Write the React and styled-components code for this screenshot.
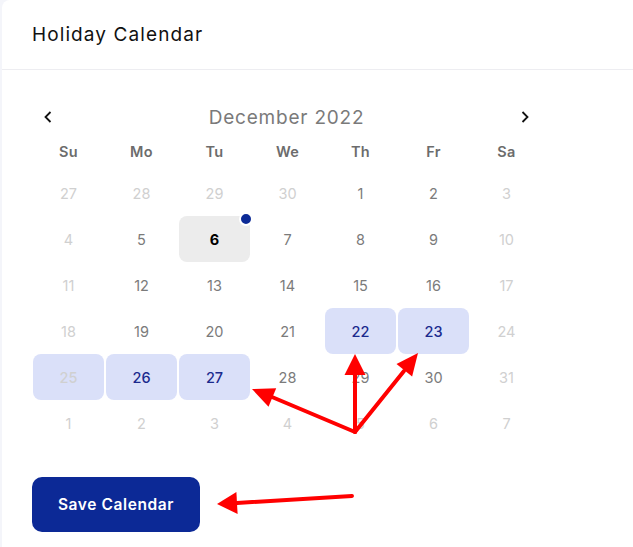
import React from "react";
import styled, { createGlobalStyle } from "styled-components";

const GlobalStyle = createGlobalStyle`
  body {
    margin: 0;
    background: #f4f5fa;
    font-family: "Inter", "Noto Sans", sans-serif;
  }
`;

const weekdays = ["Su", "Mo", "Tu", "We", "Th", "Fr", "Sa"];

const rows = [
  [27, 28, 29, 30, 1, 2, 3],
  [4, 5, 6, 7, 8, 9, 10],
  [11, 12, 13, 14, 15, 16, 17],
  [18, 19, 20, 21, 22, 23, 24],
  [25, 26, 27, 28, 29, 30, 31],
  [1, 2, 3, 4, 5, 6, 7],
];

const selected = [22, 23, 25, 26, 27];
const today = 6;

const ChevronLeft = () => (
  <svg width="8" height="12" viewBox="0 0 8 12">
    <path d="M6.5 1 L1.5 6 L6.5 11" fill="none" stroke="#111" strokeWidth="1.8" />
  </svg>
);

const ChevronRight = () => (
  <svg width="8" height="12" viewBox="0 0 8 12">
    <path d="M1.5 1 L6.5 6 L1.5 11" fill="none" stroke="#111" strokeWidth="1.8" />
  </svg>
);

const Arrows = () => (
  <Overlay width="633" height="547" viewBox="0 0 633 547">
    <g stroke="#ff0000" strokeWidth="4" strokeLinecap="round" fill="none">
      <line x1="355" y1="432" x2="355" y2="373" />
      <line x1="355" y1="432" x2="404" y2="371" />
      <line x1="355" y1="432" x2="272" y2="397" />
      <line x1="352" y1="496" x2="237" y2="503" />
    </g>
    <g fill="#ff0000">
      <polygon points="355,354 344.5,375 365.5,375" />
      <polygon points="418,353 412.1,376.4 396.5,364" />
      <polygon points="252,389 276.2,388.3 268.5,406.7" />
      <polygon points="217,504 237.6,514 236.4,492" />
    </g>
  </Overlay>
);

const App = () => {
  return (
    <>
      <GlobalStyle />
      <Card>
        <Header>Holiday Calendar</Header>
        <Body>
          <Calendar>
            <Nav>
              <NavButton>
                <ChevronLeft />
              </NavButton>
              <Month>December 2022</Month>
              <NavButton>
                <ChevronRight />
              </NavButton>
            </Nav>
            <Grid>
              {weekdays.map((w) => (
                <Weekday key={w}>{w}</Weekday>
              ))}
              {rows.map((row, r) =>
                row.map((d, c) => {
                  const outside = (r === 0 && d > 20) || r === 5;
                  const weekend = c === 0 || c === 6;
                  const isSel = !outside && selected.includes(d);
                  const isToday = !outside && d === today;
                  return (
                    <Day
                      key={`${r}-${c}`}
                      $muted={outside || weekend}
                      $selected={isSel}
                      $today={isToday}
                    >
                      {d}
                      {isToday && <Dot />}
                    </Day>
                  );
                })
              )}
            </Grid>
          </Calendar>
          <SaveButton>Save Calendar</SaveButton>
        </Body>
      </Card>
      <Arrows />
    </>
  );
};

const Card = styled.div`
  margin-left: 2px;
  min-height: 547px;
  background: #fff;
  border-top-left-radius: 8px;
`;

const Header = styled.div`
  height: 69px;
  display: flex;
  align-items: center;
  padding-left: 30px;
  border-bottom: 1px solid #ededf1;
  font-size: 19px;
  letter-spacing: 1.1px;
  font-weight: 400;
  color: #111;
`;

const Body = styled.div`
  padding: 32px 0 0 30px;
`;

const Calendar = styled.div`
  width: 511px;
`;

const Nav = styled.div`
  height: 30px;
  display: flex;
  align-items: center;
  justify-content: space-between;
  padding: 0 14px 0 12px;
  margin-bottom: 2px;
`;

const NavButton = styled.span`
  display: flex;
  align-items: center;
  justify-content: center;
  width: 8px;
  height: 12px;
`;

const Month = styled.div`
  font-size: 19px;
  letter-spacing: 0.8px;
  color: #7a7a7a;
  font-weight: 400;
`;

const Grid = styled.div`
  display: grid;
  grid-template-columns: repeat(7, 73px);
  grid-template-rows: 36px;
  grid-auto-rows: 46px;
`;

const Weekday = styled.div`
  display: flex;
  align-items: center;
  justify-content: center;
  padding-bottom: 2px;
  font-size: 14.5px;
  letter-spacing: 0.3px;
  font-weight: 600;
  color: #6c6c6c;
`;

const Day = styled.div`
  position: relative;
  display: flex;
  align-items: center;
  justify-content: center;
  margin: 0 1px;
  border-radius: 8px;
  font-size: 14.5px;
  font-weight: ${(p) => (p.$today ? 700 : p.$selected ? 500 : 400)};
  color: ${(p) =>
    p.$today ? "#000" : p.$muted ? "#d0d0d0" : p.$selected ? "#1b2b8e" : "#7b7b7b"};
  background: ${(p) => (p.$today ? "#ececec" : p.$selected ? "#dae0f9" : "transparent")};
`;

const Dot = styled.span`
  position: absolute;
  top: -4px;
  right: -3px;
  width: 10px;
  height: 10px;
  border-radius: 50%;
  background: #0c2a96;
  border: 2px solid #fff;
`;

const SaveButton = styled.button`
  margin-top: 31px;
  width: 168px;
  height: 55px;
  border: none;
  border-radius: 10px;
  background: #0c2996;
  color: #fff;
  font-family: "Inter", "Noto Sans", sans-serif;
  font-size: 15.5px;
  letter-spacing: 0.6px;
  font-weight: 600;
`;

const Overlay = styled.svg`
  position: absolute;
  left: 0;
  top: 0;
  pointer-events: none;
`;

export default App;
